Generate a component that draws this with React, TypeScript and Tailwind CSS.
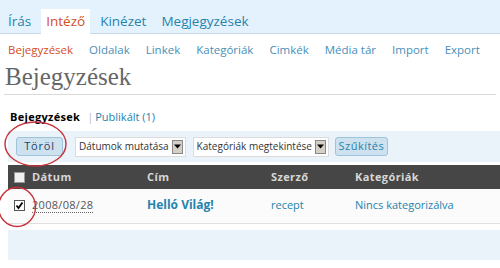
const TABS = ['Írás', 'Intéző', 'Kinézet', 'Megjegyzések'];
const SUBMENU = ['Bejegyzések', 'Oldalak', 'Linkek', 'Kategóriák', 'Cimkék', 'Média tár', 'Import', 'Export'];

const SelectBox = ({ label, width }: { label: string; width: string }) => (
  <div className={`flex h-[20px] items-center justify-between gap-[3px] border border-[#dcdcdc] bg-white pl-[3px] pr-[2px] ${width}`}>
    <span className="text-[10px] text-[#333]">{label}</span>
    <span className="flex h-[14px] w-[11px] shrink-0 items-center justify-center border border-[#888] bg-[#d4d0c8]">
      <svg className="h-[5px] w-[7px]" viewBox="0 0 7 4">
        <path d="M0 0h7L3.5 4z" fill="#000" />
      </svg>
    </span>
  </div>
);

export default function App() {
  return (
    <div className="relative h-[268px] w-[500px] overflow-hidden whitespace-nowrap bg-white font-['Open_Sans',sans-serif]">
      {/* Top tabs */}
      <div className="flex h-[34px] items-end gap-[5px] border-b border-[#c6d9e9] bg-[#e4f2fd] pl-[3px]">
        {TABS.map((tab) => (
          <div
            key={tab}
            className={`-mb-px px-[5px] pb-[3px] pt-[3px] text-[13.5px] leading-[19px] ${
              tab === 'Intéző' ? 'bg-white text-[#d54e21]' : 'text-[#2583ad]'
            }`}
          >
            {tab}
          </div>
        ))}
      </div>

      {/* Submenu */}
      <div className="flex h-[29px] items-center gap-[16px] pl-[8px] pt-[2px] text-[11.5px]">
        {SUBMENU.map((item) => (
          <span key={item} className={item === 'Bejegyzések' ? 'text-[#d54e21]' : 'text-[#4a8fb8]'}>
            {item}
          </span>
        ))}
      </div>

      {/* Title */}
      <div className="mx-[4px] h-[32px] border-b border-[#dadada] pl-[1px] font-['Liberation_Serif',serif] text-[25px] leading-[28px] text-[#666]">
        Bejegyzések
      </div>

      {/* Status filter */}
      <div className="flex h-[36px] items-center pl-[10px] pt-[8px] text-[11px]">
        <span className="font-bold tracking-[0.3px] text-black">Bejegyzések</span>
        <span className="ml-[7px] text-[#bbb]">|</span>
        <span className="ml-[2px] text-[#2583ad]">Publikált (1)</span>
      </div>

      {/* Toolbar */}
      <div className="ml-[8px] flex h-[31px] items-center bg-[#eaf3fa] pl-[8px]">
        <div className="flex h-[19px] w-[47px] items-center justify-center rounded-[3px] border border-[#9ec4dc] bg-[#cee1ef] text-[11px] tracking-[0.8px] text-[#246]">
          Töröl
        </div>
        <div className="ml-[12px]">
          <SelectBox label="Dátumok mutatása" width="min-w-[103px]" />
        </div>
        <div className="ml-[7px]">
          <SelectBox label="Kategóriák megtekintése" width="min-w-[131px]" />
        </div>
        <div className="ml-[6px] flex h-[19px] w-[53px] items-center justify-center rounded-[3px] border border-[#9ec4dc] bg-[#cee1ef] text-[11px] tracking-[0.5px] text-[#2583ad]">
          Szűkítés
        </div>
      </div>

      {/* Table */}
      <div className="ml-[8px] mt-[3px]">
        <div className="flex h-[24px] items-center bg-[#464646] text-[11px] font-bold tracking-[0.4px] text-[#d7d7d7]">
          <span className="ml-[6px] h-[11px] w-[11px] border border-[#999] bg-[#f0f0f0]" />
          <span className="ml-[7px] w-[115px]">Dátum</span>
          <span className="w-[124px]">Cím</span>
          <span className="w-[84px]">Szerző</span>
          <span>Kategóriák</span>
        </div>
        <div className="flex h-[35px] items-center border-b border-[#dfdfdf] bg-[#fbfbfb] pb-[2px] text-[11px]">
          <span className="ml-[6px] flex h-[11px] w-[11px] items-center justify-center border border-[#555] bg-white">
            <svg className="h-[9px] w-[9px]" viewBox="0 0 9 9">
              <path d="M1.5 4.5 3.5 7 7.5 1.5" fill="none" stroke="#000" strokeWidth="1.8" />
            </svg>
          </span>
          <span className="ml-[7px] w-[115px]">
            <span className="border-b border-dotted border-[#666] tracking-[0.3px] text-[#555]">2008/08/28</span>
          </span>
          <span className="w-[124px] text-[12px] font-bold text-[#2583ad]">Helló Világ!</span>
          <span className="w-[84px] text-[#2583ad]">recept</span>
          <span className="text-[#2583ad]">Nincs kategorizálva</span>
        </div>
      </div>

      <div className="ml-[8px] mt-[6px] h-[30px] bg-[#eaf2fa]" />

      {/* Annotation circles */}
      <svg className="pointer-events-none absolute left-0 top-0 h-[268px] w-[500px]" viewBox="0 0 500 268">
        <ellipse cx="35.5" cy="144" rx="30.5" ry="22" fill="none" stroke="#c8323a" strokeWidth="1.4" />
        <ellipse cx="17" cy="207" rx="18.5" ry="19.5" fill="none" stroke="#c8323a" strokeWidth="1.4" />
      </svg>
    </div>
  );
}
